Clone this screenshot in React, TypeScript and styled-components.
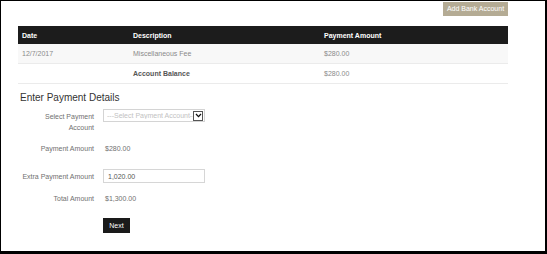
import styled, { createGlobalStyle } from "styled-components";

const GlobalStyle = createGlobalStyle`
  html, body {
    margin: 0;
    padding: 0;
    background: #ffffff;
  }
  body {
    font-family: "Liberation Sans", Arial, sans-serif;
  }
`;

type Charge = {
  date: string;
  description: string;
  amount: string;
};

const charges: Charge[] = [
  { date: "12/7/2017", description: "Miscellaneous Fee", amount: "$280.00" },
];

export default function App(): JSX.Element {
  return (
    <>
      <GlobalStyle />
      <Frame>
        <TopBar>
          <TanButton type="button">Add Bank Account</TanButton>
        </TopBar>

        <Table>
          <HeadRow>
            <HeadCell>Date</HeadCell>
            <HeadCell>Description</HeadCell>
            <HeadCell>Payment Amount</HeadCell>
          </HeadRow>
          {charges.map((c) => (
            <BodyRow key={c.date} $striped>
              <Cell>{c.date}</Cell>
              <Cell>{c.description}</Cell>
              <Cell>{c.amount}</Cell>
            </BodyRow>
          ))}
          <BodyRow>
            <Cell />
            <Cell $strong>Account Balance</Cell>
            <Cell>$280.00</Cell>
          </BodyRow>
        </Table>

        <Heading>Enter Payment Details</Heading>

        <FormRow $space={5} $top>
          <Label $wrap>Select Payment Account</Label>
          <SelectBox>
            <Select defaultValue="">
              <option value="">---Select Payment Account---</option>
            </Select>
            <ArrowBox>
              <svg width="7" height="5" viewBox="0 0 7 5">
                <path d="M1 1 L3.5 3.6 L6 1" fill="none" stroke="#111" strokeWidth="1.3" />
              </svg>
            </ArrowBox>
          </SelectBox>
        </FormRow>

        <FormRow $space={10}>
          <Label>Payment Amount</Label>
          <Value>$280.00</Value>
        </FormRow>

        <FormRow $space={15}>
          <Label>Extra Payment Amount</Label>
          <Input defaultValue="1,020.00" />
        </FormRow>

        <FormRow $space={10}>
          <Label>Total Amount</Label>
          <Value>$1,300.00</Value>
        </FormRow>

        <FormRow $space={14}>
          <Label />
          <NextButton type="button">Next</NextButton>
        </FormRow>
      </Frame>
    </>
  );
}

const Frame = styled.div`
  box-sizing: border-box;
  width: 547px;
  height: 254px;
  border-style: solid;
  border-color: #000000;
  border-width: 1px 2px 3px 1px;
  padding: 1px 37px 0 17px;
  display: flex;
  flex-direction: column;
`;

const TopBar = styled.div`
  display: flex;
  justify-content: flex-end;
`;

const TanButton = styled.button`
  width: 65px;
  height: 14px;
  padding: 0;
  border: none;
  background: #b4ab94;
  color: #ffffff;
  font-family: "Liberation Sans", Arial, sans-serif;
  font-size: 7px;
  line-height: 14px;
`;

const Table = styled.div`
  margin-top: 10px;
  display: flex;
  flex-direction: column;
`;

const HeadRow = styled.div`
  display: grid;
  grid-template-columns: 111px 191px 1fr;
  height: 18px;
  align-items: center;
  background: #1c1c1c;
`;

const HeadCell = styled.div`
  padding-left: 4px;
  color: #ffffff;
  font-size: 7px;
  font-weight: bold;
`;

const BodyRow = styled.div<{ $striped?: boolean }>`
  display: grid;
  grid-template-columns: 111px 191px 1fr;
  height: 20px;
  align-items: center;
  box-sizing: border-box;
  border-bottom: 1px solid #ebebeb;
  background: ${(p) => (p.$striped ? "#f8f8f8" : "#ffffff")};
`;

const Cell = styled.div<{ $strong?: boolean }>`
  padding-left: 4px;
  font-size: 7px;
  color: ${(p) => (p.$strong ? "#555555" : "#8a8a8a")};
  font-weight: ${(p) => (p.$strong ? "bold" : "normal")};
`;

const Heading = styled.h2`
  margin: 8px 0 0 2px;
  font-size: 10px;
  line-height: 12px;
  font-weight: normal;
  color: #333333;
`;

const FormRow = styled.div<{ $space: number; $top?: boolean }>`
  display: grid;
  grid-template-columns: 76px 102px;
  column-gap: 9px;
  margin-top: ${(p) => p.$space}px;
  align-items: ${(p) => (p.$top ? "start" : "center")};
`;

const Label = styled.div<{ $wrap?: boolean }>`
  text-align: right;
  font-size: 7px;
  line-height: 11px;
  color: #707070;
  padding: ${(p) => (p.$wrap ? "2px 0 0 8px" : "0")};
  white-space: ${(p) => (p.$wrap ? "normal" : "nowrap")};
`;

const Value = styled.div`
  padding-left: 2px;
  font-size: 7px;
  line-height: 11px;
  color: #707070;
`;

const SelectBox = styled.div`
  display: flex;
  align-items: center;
  box-sizing: border-box;
  width: 102px;
  height: 13px;
  border: 1px solid #d4d4d4;
  background: #ffffff;
  overflow: hidden;
`;

const Select = styled.select`
  appearance: none;
  flex: 1;
  min-width: 0;
  height: 100%;
  padding: 0 0 0 3px;
  border: none;
  outline: none;
  background: transparent;
  font-family: "Liberation Sans", Arial, sans-serif;
  font-size: 7px;
  color: #c2c2c2;
`;

const ArrowBox = styled.div`
  display: flex;
  align-items: center;
  justify-content: center;
  box-sizing: border-box;
  width: 10px;
  height: 10px;
  margin-right: 1px;
  border: 1px solid #555555;
  background: #ffffff;
`;

const Input = styled.input`
  box-sizing: border-box;
  width: 102px;
  height: 14px;
  padding: 0 0 0 4px;
  border: 1px solid #d6d6d6;
  outline: none;
  font-family: "Liberation Sans", Arial, sans-serif;
  font-size: 7px;
  color: #555555;
`;

const NextButton = styled.button`
  width: 27px;
  height: 15px;
  padding: 0;
  border: none;
  background: #1a1a1a;
  color: #ffffff;
  font-family: "Liberation Sans", Arial, sans-serif;
  font-size: 7px;
  line-height: 15px;
`;
